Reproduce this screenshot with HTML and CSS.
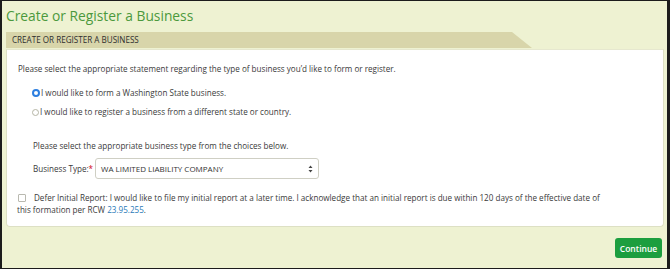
FILE: index.html
```html
<!DOCTYPE html>
<html lang="en">
<head>
    <meta charset="UTF-8">
    <title>Create or Register a Business</title>
    <link rel="stylesheet" href="styles.css">
</head>
<body>
    <div class="frame">
        <h1 class="page-title">Create or Register a Business</h1>
        <div class="panel">
            <div class="panel-head">
                <div class="panel-tab">CREATE OR REGISTER A BUSINESS</div>
            </div>
            <div class="panel-body">
                <p class="lead">Please select the appropriate statement regarding the type of business you’d like to form or register.</p>
                <div class="choices">
                    <label class="choice"><span class="radio checked"></span>I would like to form a Washington State business.</label>
                    <label class="choice"><span class="radio"></span>I would like to register a business from a different state or country.</label>
                </div>
                <div class="type-block">
                    <p class="type-hint">Please select the appropriate business type from the choices below.</p>
                    <div class="type-row">
                        <span class="type-label">Business Type:<span class="req">*</span></span>
                        <div class="select">
                            <span>WA LIMITED LIABILITY COMPANY</span>
                            <svg width="5" height="8" viewBox="0 0 5 8"><path d="M0.5 3 L2.5 0.5 L4.5 3 Z M0.5 5 L2.5 7.5 L4.5 5 Z" fill="#444"/></svg>
                        </div>
                    </div>
                </div>
                <p class="defer"><span class="checkbox"></span>Defer Initial Report: I would like to file my initial report at a later time. I acknowledge that an initial report is due within 120 days of the effective date of<br>this formation per RCW <a href="#">23.95.255</a>.</p>
            </div>
        </div>
        <div class="actions">
            <button class="btn-continue">Continue</button>
        </div>
    </div>
</body>
</html>
```

FILE: styles.css
```css
body {
    margin: 0;
    font-family: 'Open Sans', 'Liberation Sans', sans-serif;
    color: #3a3a3a;
}
.frame {
    box-sizing: border-box;
    width: 670px;
    height: 269px;
    border: 1px solid #1c1c1c;
    border-left-width: 2px;
    border-right-width: 3px;
    background-color: #eef2d2;
    padding: 0 3px 0 4px;
}
.page-title {
    margin: 0;
    padding-top: 6px;
    height: 25px;
    font-size: 13.8px;
    line-height: 18px;
    font-weight: 400;
    color: #4b993d;
}
.panel-head {
    height: 16px;
}
.panel-tab {
    width: 526px;
    height: 16px;
    background-color: #d8d5aa;
    clip-path: polygon(0 0, 506px 0, 100% 100%, 0 100%);
    font-size: 8.1px;
    font-weight: 400;
    line-height: 16px;
    padding-left: 6px;
    box-sizing: border-box;
    color: #2e2e2e;
}
.panel-body {
    background-color: #fff;
    border: 1px solid #dde0c4;
    border-top: 1px solid #e6e8cf;
    border-radius: 0 0 4px 4px;
    margin-top: 1px;
    height: 178px;
    box-sizing: border-box;
    padding: 12px 10px 0 11px;
    font-size: 8.1px;
}
.lead {
    margin: 0;
    line-height: 14px;
}
.choices {
    display: flex;
    flex-direction: column;
    gap: 5px;
    margin-top: 10px;
    padding-left: 14px;
}
.choice {
    display: flex;
    align-items: center;
    line-height: 14px;
}
.radio {
    width: 7px;
    height: 7px;
    border: 1px solid #b5b5a5;
    border-radius: 50%;
    margin-right: 1px;
    box-sizing: border-box;
}
.radio.checked {
    border: 2.5px solid #2d7fe0;
    background: #fff;
    width: 8px;
    height: 8px;
}
.type-block {
    padding-left: 15px;
    margin-top: 20px;
}
.type-hint {
    margin: 0;
    line-height: 14px;
}
.type-row {
    display: flex;
    align-items: center;
    margin-top: 5px;
}
.type-label {
    width: 62px;
    white-space: nowrap;
}
.req {
    color: #d0021b;
}
.select {
    width: 224px;
    height: 21px;
    box-sizing: border-box;
    border: 1px solid #cfcfc4;
    border-radius: 3px;
    display: flex;
    align-items: center;
    justify-content: space-between;
    padding: 0 5px 0 5px;
    font-size: 8px;
    color: #333;
}
.defer {
    margin: 13px 0 0 -1px;
    line-height: 12px;
}
.checkbox {
    display: inline-block;
    width: 6px;
    height: 6px;
    border: 1px solid #b9b9b0;
    border-radius: 1px;
    margin: 0 8px 0 1px;
    vertical-align: -1px;
}
.defer a {
    color: #2a7bb8;
    text-decoration: none;
}
.actions {
    display: flex;
    justify-content: flex-end;
    padding-top: 11px;
    padding-right: 2px;
}
.btn-continue {
    background-color: #1c9e3f;
    color: #fff;
    border: none;
    border-radius: 3px;
    font-family: 'Open Sans', 'Liberation Sans', sans-serif;
    font-size: 8.5px;
    font-weight: 600;
    width: 47px;
    height: 20px;
    padding: 0;
}
```
